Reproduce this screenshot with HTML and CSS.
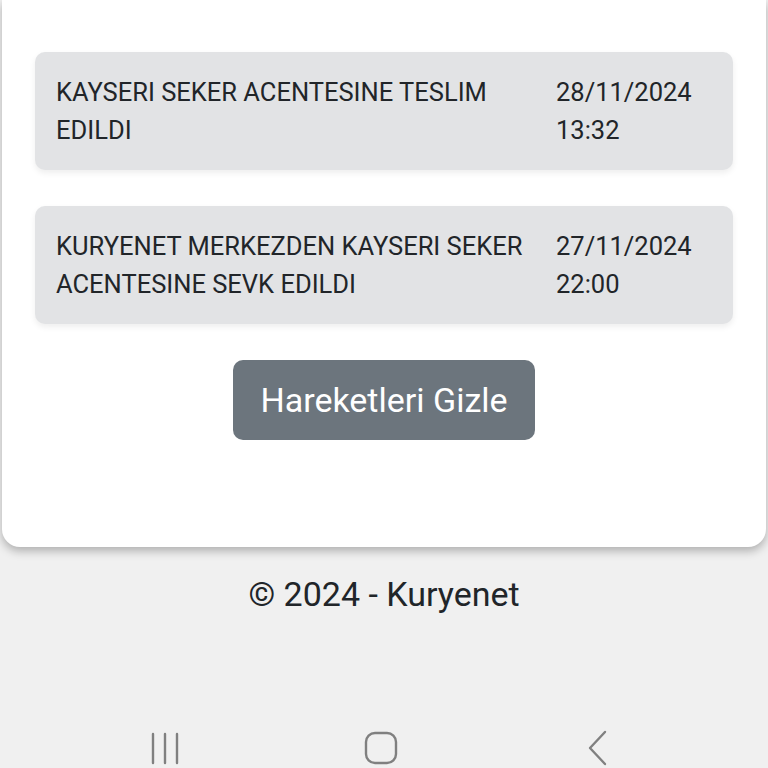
FILE: index.html
```html
<!DOCTYPE html>
<html lang="tr">
<head>
  <meta charset="UTF-8" />
  <meta name="viewport" content="width=device-width, initial-scale=1" />
  <title>Kuryenet - Gönderi Takip</title>
  <link rel="stylesheet" href="styles.css">
</head>
<body>
  <main class="card">
    <div class="movement">
      <div class="movement-text">KAYSERI SEKER ACENTESINE TESLIM EDILDI</div>
      <div class="movement-date">28/11/2024<br>13:32</div>
    </div>
    <div class="movement">
      <div class="movement-text">KURYENET MERKEZDEN KAYSERI SEKER ACENTESINE SEVK EDILDI</div>
      <div class="movement-date">27/11/2024<br>22:00</div>
    </div>
    <div class="actions">
      <button type="button" class="btn-toggle">Hareketleri Gizle</button>
    </div>
  </main>
  <footer class="footer">© 2024 - Kuryenet</footer>
  <nav class="navbar">
    <svg class="nav-icon" width="36" height="36" viewBox="0 0 36 36" fill="none" stroke="#808080" stroke-width="2.4" stroke-linecap="round">
      <line x1="5" y1="4" x2="5" y2="33" />
      <line x1="17" y1="4" x2="17" y2="33" />
      <line x1="29" y1="4" x2="29" y2="33" />
    </svg>
    <svg class="nav-icon" width="36" height="36" viewBox="0 0 36 36" fill="none" stroke="#808080" stroke-width="2.4">
      <rect x="3" y="3" width="30" height="30" rx="9" />
    </svg>
    <svg class="nav-icon" width="36" height="36" viewBox="0 0 36 36" fill="none" stroke="#808080" stroke-width="2.4" stroke-linecap="round" stroke-linejoin="round">
      <polyline points="27,2 12,18 27,34" />
    </svg>
  </nav>
</body>
</html>
```

FILE: styles.css
```css
* {
  box-sizing: border-box;
}
body {
  margin: 0;
  font-family: Roboto, "Noto Sans", sans-serif;
  background: #f0f0f0;
  color: #212529;
  height: 768px;
  overflow: hidden;
}
.card {
  margin: 0 2px;
  padding: 52px 33px 107px;
  background: #fff;
  border-bottom-left-radius: 18px;
  border-bottom-right-radius: 18px;
  box-shadow: 0 4px 10px rgba(0,0,0,0.28);
  display: flex;
  flex-direction: column;
  gap: 36px;
}
.movement {
  display: grid;
  grid-template-columns: 1fr 156px;
  column-gap: 20px;
  padding: 21px 21px;
  background: #e2e3e5;
  border-radius: 10px;
  box-shadow: 0 3px 6px rgba(0,0,0,0.07);
  font-size: 25.5px;
  line-height: 38px;
}
.actions {
  display: flex;
  justify-content: center;
}
.btn-toggle {
  width: 302px;
  height: 80px;
  background: #6c757d;
  color: #fff;
  border: none;
  border-radius: 10px;
  font-family: inherit;
  font-size: 34px;
  cursor: pointer;
}
.footer {
  padding-top: 28px;
  text-align: center;
  font-size: 34px;
  line-height: 38px;
  color: #212529;
}
.navbar {
  position: fixed;
  left: 0;
  right: 0;
  bottom: 0;
  height: 38px;
  display: flex;
  justify-content: space-between;
  padding: 0 154px 0 148px;
  align-items: flex-start;
}
.nav-icon {
  display: block;
}
```
